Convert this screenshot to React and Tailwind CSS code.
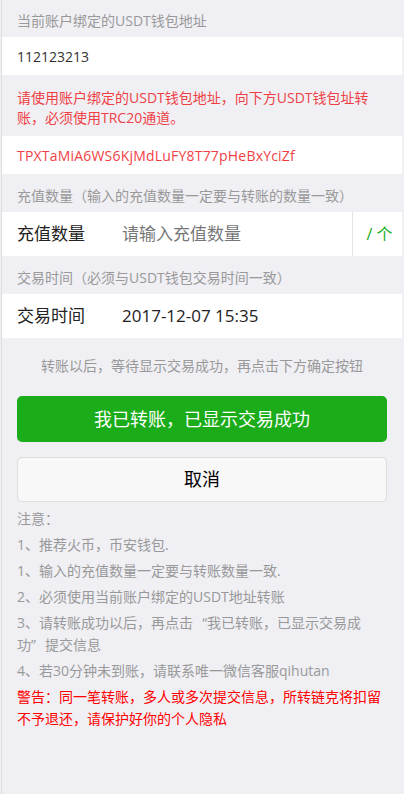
import React, { useState } from "react";

const font = "font-['Open_Sans','Noto_Sans_CJK_SC',sans-serif]";

function Label({ children }) {
  return (
    <div className="h-[38px] px-[15px] pt-[12px] text-[14px] leading-[20px] text-[#999]">
      {children}
    </div>
  );
}

export default function App() {
  const [amount, setAmount] = useState("");

  return (
    <div className={`${font} min-h-[794px] bg-[#efeff4] pl-px pr-[2px]`}>
      <div className="min-h-[794px] border-l border-[#ddd]">
        <div className="h-[37px] px-[15px] pt-[11px] text-[14px] leading-[20px] text-[#999]">
          当前账户绑定的USDT钱包地址
        </div>
        <div className="flex h-[38px] items-center bg-white px-[15px] text-[14px] text-[#333]">
          112123213
        </div>

        <div className="px-[15px] pt-[13px] pb-[8px] text-[14px] leading-[20px] text-[#ef3f45]">
          请使用账户绑定的USDT钱包地址，向下方USDT钱包址转账，必须使用TRC20通道。
        </div>
        <div className="flex h-[38px] items-center bg-white px-[15px] text-[14px] tracking-[0.2px] text-[#ef3f45]">
          TPXTaMiA6WS6KjMdLuFY8T77pHeBxYciZf
        </div>

        <Label>充值数量（输入的充值数量一定要与转账的数量一致）</Label>
        <div className="flex h-[44px] items-stretch bg-white text-[17px]">
          <div className="flex w-[120px] shrink-0 items-center pl-[15px] text-[#222]">
            充值数量
          </div>
          <input
            value={amount}
            onChange={(e) => setAmount(e.target.value)}
            placeholder="请输入充值数量"
            className="min-w-0 flex-1 bg-transparent text-[17px] text-[#222] outline-none placeholder:text-[#777]"
          />
          <div className="flex w-[50px] shrink-0 items-center justify-center gap-[4px] border-l border-[#e5e5e5] pl-[4px] text-[16px] text-[#1aad19]">
            <span>/</span>
            <span>个</span>
          </div>
        </div>

        <Label>交易时间（必须与USDT钱包交易时间一致）</Label>
        <div className="flex h-[44px] items-center bg-white text-[17px] text-[#222]">
          <div className="w-[120px] shrink-0 pl-[15px]">交易时间</div>
          <div>2017-12-07 15:35</div>
        </div>

        <div className="mt-[18px] text-center text-[14px] leading-[20px] text-[#999]">
          转账以后，等待显示交易成功，再点击下方确定按钮
        </div>

        <div className="px-[15px]">
          <button className="mt-[20px] flex h-[46px] w-full items-center justify-center rounded-[5px] bg-[#1aad19] text-[18px] text-white">
            我已转账，已显示交易成功
          </button>
          <button className="mt-[15px] flex h-[45px] w-full items-center justify-center rounded-[5px] border border-[#ddd] bg-[#f8f8f8] text-[18px] text-black">
            取消
          </button>

          <div className="mt-[6px] text-[14px] leading-[22px] text-[#999]">
            <p>注意：</p>
            <p className="mt-[4px]">1、推荐火币，币安钱包.</p>
            <p className="mt-[4px]">1、输入的充值数量一定要与转账数量一致.</p>
            <p className="mt-[4px]">2、必须使用当前账户绑定的USDT地址转账</p>
            <p className="mt-[4px]">
              3、请转账成功以后，再点击<span className="inline-block w-[14px] text-right">“</span>我已转账，已显示交易成
              <br />
              功<span className="inline-block w-[14px]">”</span>提交信息
            </p>
            <p className="mt-[4px]">4、若30分钟未到账，请联系唯一微信客服qihutan</p>
            <p className="mt-[4px] text-[#f00]">
              警告：同一笔转账，多人或多次提交信息，所转链克将扣留不予退还，请保护好你的个人隐私
            </p>
          </div>
        </div>
      </div>
    </div>
  );
}
